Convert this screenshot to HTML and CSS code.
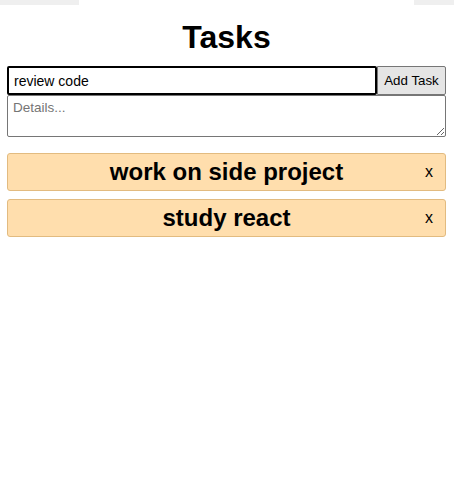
FILE: index.html
```html
<!DOCTYPE html>
<html>
<head>
<meta charset="utf-8">
<link rel="stylesheet" href="styles.css">
</head>
<body>
<div class="topbar"><span class="tb-left"></span><span class="tb-mid"></span><span class="tb-right"></span></div>
<div class="app">
  <h1 class="title">Tasks</h1>
  <form class="form">
    <div class="row">
      <input class="task-input" type="text" value="review code">
      <button class="add-btn" type="button">Add Task</button>
    </div>
    <textarea class="details" placeholder="Details..."></textarea>
  </form>
  <ul class="list">
    <li class="task"><span class="task-name">work on side project</span><span class="remove">x</span></li>
    <li class="task"><span class="task-name">study react</span><span class="remove">x</span></li>
  </ul>
</div>
</body>
</html>
```
FILE: styles.css
```css
* { box-sizing: border-box; }
html, body { margin: 0; padding: 0; background: #fff; }
body { font-family: "Liberation Sans", Arial, sans-serif; color: #000; }
.topbar { display: flex; height: 5px; }
.tb-left { width: 79px; background: #efefef; }
.tb-mid { flex: 1; }
.tb-right { width: 40px; background: #efefef; }
.app { padding: 0 8px 0 7px; }
.title { margin: 14px 0 10px; font-size: 32px; font-weight: bold; text-align: center; line-height: 37px; }
.form { display: flex; flex-direction: column; }
.row { display: flex; }
.task-input { flex: 1; height: 29px; border: 2px solid #000; border-radius: 2px; font: 14px "Liberation Sans", Arial, sans-serif; padding: 0 5px; color: #000; outline: none; }
.add-btn { height: 29px; width: 69px; background: #e5e5e5; border: 1px solid #767676; border-radius: 0 2px 2px 0; font: 13.33px "Liberation Sans", Arial, sans-serif; color: #000; padding: 0 5px; }
.details { height: 42px; border: 1px solid #767676; border-radius: 2px; font: 13.5px "Liberation Sans", Arial, sans-serif; padding: 4px 5px 2px; resize: vertical; }
.details::placeholder { color: #757575; }
.list { list-style: none; margin: 16px 0 0; padding: 0; display: flex; flex-direction: column; gap: 8px; }
.task { position: relative; height: 38px; background: #ffdead; border: 1px solid #e2bb80; border-radius: 3px; display: flex; align-items: center; justify-content: center; }
.task-name { font-size: 24px; font-weight: bold; }
.remove { position: absolute; right: 12px; top: 50%; transform: translateY(-50%); font-size: 16px; }
```
